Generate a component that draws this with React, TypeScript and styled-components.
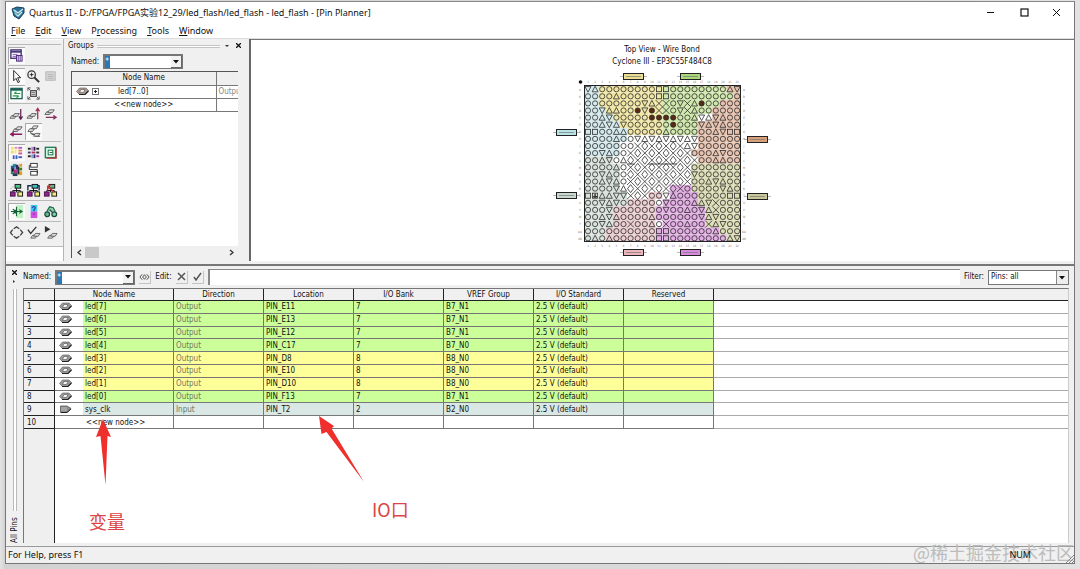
import React from 'react';
import styled, { createGlobalStyle } from 'styled-components';

const Global = createGlobalStyle`
  * { box-sizing: border-box; }
  body { margin: 0; background: #dcdcdc; color: #111; font: 8px/12px "DejaVu Sans Condensed", "Noto Sans CJK SC", sans-serif; }
  button, input, select { font: inherit; color: inherit; margin: 0; padding: 0; border: 0; border-radius: 0; }
  button { background: none; }
  h1, h2, p { margin: 0; font-weight: normal; font-size: inherit; }
`;

const ui = '"Noto Sans", "Noto Sans CJK SC", sans-serif';

const Desktop = styled.div`
  display: flex;
  min-height: 100vh;
  padding: 1px 5px 5px;
  background: linear-gradient(90deg, #e4e4e4, #d2d2d2 5px, #d8d8d8 50%, #e2e2e2);
`;
const Window = styled.main`
  flex: 1;
  min-width: 0;
  display: flex;
  flex-direction: column;
  background: #f0f0f0;
  border: 1px solid #777;
  border-top-color: #888;
`;
const TitleBar = styled.header`
  display: flex;
  align-items: center;
  gap: 4px;
  height: 21px;
  padding: 0 5px;
  background: #fff;
  font: 9px/16px ${ui};
  h1 { flex: 1; }
`;
const WindowButton = styled.button`
  display: flex;
  justify-content: center;
  align-items: center;
  width: 30px;
  height: 20px;
  &:last-child { width: 26px; }
`;
const MenuBar = styled.nav`
  display: flex;
  gap: 10px;
  height: 15px;
  padding: 0 5px;
  background: #fff;
  font: 9px/14px ${ui};
  u { text-underline-offset: 1px; }
`;
const Upper = styled.section`
  display: flex;
  height: 223px;
  border-top: 1px solid #ddd;
`;
const ToolColumn = styled.div`
  width: 58px;
  background: #fff;
  border-right: 1px solid #b4b4b4;
`;
const Toolbar = styled.div`
  padding: 4px 2px;
  background: #f0f0f0;
  border-bottom: 1px solid #bbb;
  border-top: 1px solid #fff;
`;
const ToolGroup = styled.div`
  display: grid;
  grid-template-columns: repeat(3, 17px);
  grid-auto-rows: 17px;
  padding: 2px 0 1px;
  border-top: 1px solid #bababa;
`;
const ToolButton = styled.button<{ $on?: boolean }>`
  display: flex;
  justify-content: center;
  align-items: center;
  background: ${p => (p.$on ? '#fafafa' : 'transparent')};
  box-shadow: ${p => (p.$on ? 'inset 1px 1px #aaa' : 'none')};
`;
const GroupsPanel = styled.div`
  width: 187px;
  display: flex;
  flex-direction: column;
  padding: 1px 11px 3px 4px;
  border-right: 2px solid #666;
`;
const PanelTitle = styled.div`
  display: flex;
  align-items: center;
  gap: 3px;
  height: 12px;
  margin-right: -4px;
`;
const Grip = styled.span`
  flex: 1;
  height: 3px;
  border: solid #c4c4c4;
  border-width: 1px 0;
  background: #fff;
`;
const TinyButton = styled.button`
  width: 8px;
  height: 10px;
  line-height: 8px;
`;
const NamedRow = styled.div`
  display: flex;
  align-items: center;
  gap: 4px;
  height: 19px;
  padding-left: 3px;
`;
const Combo = styled.div`
  display: flex;
  height: 15px;
  background: #fff;
  border: 1px solid #777;
  border-top-width: 2px;
  border-left-width: 2px;
`;
const ComboInput = styled.input`
  width: 66px;
  color: #fff;
  outline: 0;
  background: linear-gradient(#2878b8, #2878b8) 0 0 / 5px 100% no-repeat #fff;
`;
const Drop = styled.button`
  width: 11px;
  background: #f2f2f2;
  border: solid #666;
  border-width: 0 1px 1px 0;
  display: flex;
  align-items: center;
  justify-content: center;
`;
const GroupsBox = styled.div`
  flex: 1;
  display: flex;
  flex-direction: column;
  justify-content: space-between;
  margin-left: 3px;
  overflow: hidden;
  background: #fff;
  border: solid #555;
  border-width: 1px 0 0 1px;
`;
const GroupsTable = styled.table`
  width: 200px;
  table-layout: fixed;
  border-collapse: collapse;
  th { background: #efefef; font-weight: normal; }
  td, th { height: 13px; padding: 0 2px; border: solid #777; border-width: 0 1px 1px 0; text-align: center; white-space: nowrap; }
  td:last-child { text-align: left; color: #888; }
`;
const GroupName = styled.div`
  display: grid;
  grid-template-columns: 14px 10px 1fr;
  align-items: center;
  gap: 2px;
  padding-left: 2px;
  text-align: left;
  span { padding-left: 14px; }
`;
const Plus = styled.button`
  display: flex;
  justify-content: center;
  align-items: center;
  width: 7px;
  height: 7px;
  border: 1px solid #777;
`;
const ScrollBar = styled.div`
  display: flex;
  align-items: center;
  height: 12px;
  padding: 0 3px;
  background: #f0f0f0;
  button { width: 8px; height: 12px; display: flex; align-items: center; justify-content: center; }
`;
const Thumb = styled.span`
  width: 14px;
  height: 11px;
  margin: 0 auto 0 2px;
  background: #c9c9c9;
`;
const DeviceView = styled.div`
  flex: 1;
  display: flex;
  flex-direction: column;
  align-items: center;
  padding: 4px 1px 0 0;
  background: #fff;
  border-top: 1px solid #777;
  text-align: center;
`;
const Lower = styled.section`
  flex: 1;
  position: relative;
  display: flex;
  margin-top: 3px;
  border-top: 2px solid #777;
  border-bottom: 1px solid #999;
  padding-bottom: 3px;
`;
const Rail = styled.div`
  width: 17px;
  display: flex;
  flex-direction: column;
  align-items: center;
  gap: 2px;
  padding-top: 2px;
`;
const RailGrip = styled.span`
  flex: 1;
  width: 4px;
  margin-top: 4px;
  border: solid #bbb;
  border-width: 0 1px;
  background: #fff;
`;
const RailLabel = styled.h2`
  writing-mode: vertical-rl;
  transform: rotate(180deg);
  height: 30px;
  line-height: 12px;
`;
const PinArea = styled.div`
  flex: 1;
  min-width: 0;
  display: flex;
  flex-direction: column;
  padding-right: 5px;
`;
const EditBar = styled.div`
  display: flex;
  align-items: center;
  gap: 4px;
  height: 22px;
`;
const SquareButton = styled.button`
  width: 12px;
  height: 13px;
  display: flex;
  align-items: center;
  justify-content: center;
  border: solid #c4c4c4;
  border-width: 0 1px 1px 0;
`;
const EditInput = styled.input`
  flex: 1;
  min-width: 0;
  height: 16px;
  background: #fff;
  border: solid #888;
  border-width: 1px 0 0 2px;
  outline: 0;
`;
const FilterBox = styled.div`
  position: relative;
  width: 81px;
  height: 15px;
  svg { position: absolute; right: 4px; top: 6px; pointer-events: none; }
`;
const FilterSelect = styled.select`
  appearance: none;
  width: 100%;
  height: 15px;
  padding-left: 2px;
  line-height: 12px;
  background: linear-gradient(#888, #888) right 11px top 0 / 1px 100% no-repeat, linear-gradient(#eee, #eee) right 0 top 0 / 11px 100% no-repeat #fff;
  border: 1px solid #777;
`;
const Sheet = styled.div`
  flex: 1;
  display: flex;
  flex-direction: column;
  background: linear-gradient(90deg, #efefef 30px, #222 30px, #222 31px, #fff 31px);
  border: solid #777;
  border-width: 1px 1px 0;
  border-right-color: #ccc;
`;
const PinTable = styled.table`
  width: 100%;
  height: 140px;
  table-layout: fixed;
  border-collapse: separate;
  border-spacing: 0;
  line-height: 11px;
  th, td { padding: 0 0 0 2px; text-align: left; font-weight: normal; white-space: nowrap; border: solid #777; border-width: 0 1px 1px 0; }
  thead th { padding: 0; text-align: center; background: #f0f0f0; border-color: #222; }
  tbody th { padding-left: 3px; background: #f0f0f0; border-color: #222; }
  tr > :last-child { border-right: 0; }
  tbody tr > :last-child { background: #fff; border-color: #aaa; }
`;
const PinRow = styled.tr<{ $tone: string }>`
  td { background: ${p => p.$tone}; }
  td.name { background: linear-gradient(90deg, #fff 28px, ${p => p.$tone} 28px); }
  td.direction { color: #6f7a66; }
`;
const NameCell = styled.div`
  display: flex;
  align-items: center;
  gap: 13px;
  padding-left: 2px;
`;
const NewNode = styled.div`
  padding-left: 29px;
`;
const StatusBar = styled.footer`
  position: relative;
  display: flex;
  align-items: center;
  justify-content: space-between;
  height: 16px;
  padding: 0 43px 0 2px;
  font: 9px/14px ${ui};
  svg { position: absolute; right: 0; bottom: 0; }
`;
const Watermark = styled.span`
  position: absolute;
  right: 0;
  bottom: 1px;
  font: 18px/20px "Noto Sans CJK SC", sans-serif;
  color: #bcbcbc;
`;
const KeyState = styled.span`
  position: relative;
  color: #111;
`;
const Note = styled.span<{ $x: number; $y: number }>`
  position: absolute;
  left: ${p => p.$x}px;
  top: ${p => p.$y}px;
  color: #db4545;
  font: 18px/22px "Noto Sans CJK SC", sans-serif;
`;
const Arrows = styled.svg`
  position: absolute;
  left: 84px;
  top: 146px;
  pointer-events: none;
`;

const DownArrow = () => <svg width="6" height="4" viewBox="0 0 6 4"><path d="M0 0h6L3 3.5z" fill="#111" /></svg>;

const PinGlyph = ({ input, tint = '#9a9a9a' }: { input?: boolean; tint?: string }) => (
  <svg width="13" height="9" viewBox="0 0 13 9">
    {input ? (
      <>
        <path d="M1.500 1h6.500l4 2.500L8 7.500H1.500z" fill="#8c8c8c" stroke="#555" strokeWidth=".8" />
        <path d="M2 3h6M2 5h6" stroke="#ccc" strokeWidth=".8" />
        <path d="M2 7.500h6l4-3.500" fill="none" stroke="#222" />
      </>
    ) : (
      <>
        <path d="M0.500 4.500L3.500 1H10l2.500 2.500L9 7.500H3.500z" fill={tint} stroke="#666" strokeWidth=".7" />
        <path d="M5 2.500h4L7.500 5.500h-4z" fill="#f4f4f4" stroke="#555" strokeWidth=".6" />
        <path d="M3 7.500h6l3.500-3.500" fill="none" stroke="#222" strokeWidth="1.200" />
      </>
    )}
  </svg>
);

const pad = (x: number, y: number) => <path d={`M${x} ${y + 3}l2-3h5l-2 3z`} fill="#ddd" stroke="#444" strokeWidth=".8" />;
const blocks = (list: [number, number, number, number, string][]) =>
  list.map(([x, y, w, h, c], i) => <rect key={i} x={x} y={y} width={w} height={h} fill={c} />);
const hierarchy = (a: string, b: string, extra: React.ReactNode) => (
  <>
    <path d="M8 5v5M4 11V8h8v3" fill="none" stroke="#111" />
    <rect x="6.500" y="1.500" width="6" height="4" fill={a} stroke="#111" />
    <rect x="1.500" y="9.500" width="5" height="4.500" fill={b} stroke="#4a1050" />
    <rect x="9.500" y="9.500" width="5" height="4.500" fill="#f2ec80" stroke="#111" />
    {extra}
  </>
);

const icons: Record<string, React.ReactNode> = {
  'Pin planner': <><rect x="2" y="2" width="11" height="9" fill="#eef" stroke="#4b3a78" strokeWidth="1.500" /><path d="M2 4h11" stroke="#4b3a78" strokeWidth="2" /><path d="M4 7h5M4 9h4" stroke="#9b5fa8" /><rect x="8" y="8" width="6" height="6" fill="#d9c8ee" stroke="#4b2a7a" /><path d="M10 8v6M12 8v6" stroke="#4b2a7a" strokeWidth=".7" /></>,
  'Select': <path d="M5 1.500v11l2.500-2.500 2 4.500 1.700-.8-2-4.400H12.500z" fill="#fff" stroke="#222" />,
  'Zoom': <><circle cx="6" cy="6" r="4" fill="#f6f6f6" stroke="#333" strokeWidth="1.300" /><path d="M4 6h4M6 4v4" stroke="#222" /><path d="M9 9l5 5" stroke="#333" strokeWidth="2.200" /></>,
  'Full screen': <><rect x="3" y="3" width="10" height="9" fill="#d6d6d6" stroke="#b4b4b4" /><path d="M5 6h6M5 8h6M5 10h6" stroke="#b4b4b4" /></>,
  'Swap view': <><rect x="2" y="2.500" width="12" height="11" fill="#f0fbf4" stroke="#165c50" strokeWidth="1.300" /><path d="M2 4h12" stroke="#165c50" strokeWidth="2" /><path d="M12 8H6M8 6L5.500 8M4 10.500h6M8 12.500l2.500-2" stroke="#2a9a50" fill="none" strokeWidth="1.200" /></>,
  'Fit window': <><rect x="5" y="5" width="6" height="6" fill="#ddd" stroke="#222" /><path d="M2 5V2h3M2 2l3 3M14 5V2h-3M14 2l-3 3M2 11v3h3M2 14l3-3M14 11v3h-3M14 14l-3-3" fill="none" stroke="#555" /><path d="M6 7h4M6 9h4" stroke="#555" strokeWidth=".8" /></>,
  'Move down': <>{pad(1, 9)}{pad(4, 7)}<path d="M12.500 2v11M10.500 10l2 3 2-3" fill="none" stroke="#5a2050" strokeWidth="1.300" /></>,
  'Move up': <>{pad(1, 9)}{pad(4, 7)}<path d="M12.500 13V2M10.500 4.500l2-3 2 3" fill="none" stroke="#a02858" strokeWidth="1.300" /></>,
  'Move right': <>{pad(2, 5)}{pad(5, 3)}<path d="M3 11h11M11 9l3 2-3 2" fill="none" stroke="#8a3060" strokeWidth="1.400" /></>,
  'Move left': <>{pad(4, 5)}{pad(7, 3)}<path d="M14 11H2M5 9l-3 2 3 2" fill="none" stroke="#8a1860" strokeWidth="1.600" /></>,
  'Route pins': <>{pad(2, 5)}{pad(6, 2)}<path d="M5 8v2l4 1" fill="none" stroke="#555" /><path d="M6 11h3.500M10 13h5" stroke="#444" />{pad(8, 10)}</>,
  'Bank colours': blocks([[2, 2, 3, 3, '#f5e66a'], [6, 2, 3, 2, '#e8a'], [10, 2, 4, 2, '#b558c8'], [2, 6, 3, 3, '#f3d85c'], [6, 5, 2, 4, '#f5e66a'], [10, 5, 4, 2, '#e48a60'], [10, 8, 4, 2, '#c8559a'], [4, 11, 2, 4, '#4a58c8'], [7, 11, 2, 4, '#36a'], [10, 12, 4, 2, '#4a58c8']]),
  'Group colours': blocks([[2, 3, 3, 2, '#222'], [6, 2, 1, 4, '#93a'], [8, 2, 2, 4, '#224'], [11, 3, 3, 2, '#222'], [2, 7, 3, 2, '#4a3a70'], [6, 7, 4, 2, '#a36'], [11, 7, 3, 2, '#333'], [2, 11, 3, 2, '#222'], [6, 10, 1, 4, '#26a'], [8, 10, 2, 4, '#426'], [11, 11, 3, 2, '#93a']]),
  'Edges': <><rect x="2.500" y="2.500" width="11" height="11" fill="#dfe" stroke="#277a5c" strokeWidth="1.500" /><path d="M14 3v11H4" fill="none" stroke="#b33" strokeWidth="1.300" /><rect x="5.500" y="5.500" width="5" height="5" fill="#ffe" stroke="#164" /><path d="M7 8h3" stroke="#164" /></>,
  'Differential pairs': blocks([[4, 2, 4, 3, '#2a9a9a'], [2, 4, 4, 4, '#235a9a'], [7, 3, 3, 5, '#3a2a60'], [11, 2, 3, 3, '#d8a030'], [2, 8, 3, 5, '#2a8a60'], [5, 8, 4, 4, '#b0308a'], [11, 6, 3, 3, '#4a7a20'], [4, 12, 5, 3, '#223a5a'], [10, 10, 4, 4, '#e0a020'], [9, 5, 2, 8, '#163a3a'], [3, 7, 2, 3, '#111']]),
  'Chain': <><rect x="5" y="1.500" width="7" height="4" fill="#fff" stroke="#333" /><rect x="5" y="10" width="7" height="4" fill="#fff" stroke="#333" /><path d="M5 3.500H3.500V8H12v4" fill="none" stroke="#333" /></>,
  'Hierarchy A': hierarchy('#4dbf8c', '#8d2a85', <path d="M2 6l3-3" stroke="#666" strokeDasharray="1 1" />),
  'Hierarchy B': hierarchy('#41b9bd', '#8d2a85', <path d="M2 8V3h4M12 3h2v5" fill="none" stroke="#135" strokeWidth="1.500" />),
  'Hierarchy C': hierarchy('#6bb08c', '#8d2a85', <path d="M5 8V4l4 3 3 3M5 4l3-2" fill="none" stroke="#c33" strokeWidth="1.500" />),
  'Fanout': <><rect x="8" y="1" width="7" height="14" fill="#c0f2c4" /><path d="M2 8h12M8 3v10M4 5.500l4 2.500-4 2.500M11 6l3 2-3 2" fill="none" stroke="#145e38" strokeWidth="1.200" /><circle cx="7" cy="8" r="2" fill="#145e38" /></>,
  'Help': <><rect x="5" y="1" width="7" height="7" fill="#35cdf0" /><rect x="5" y="8" width="7" height="7" fill="#d04de0" /><path d="M6.500 4c2-3 5 0 2 2v2M8.500 10v1.500" fill="none" stroke="#333a9c" strokeWidth="1.200" /></>,
  'Find': <><path d="M4 8l3-5 4 1 2 4" fill="#8cd0a8" stroke="#276d50" strokeWidth="1.300" /><circle cx="4.500" cy="11" r="2.500" fill="#6cba91" stroke="#164b42" strokeWidth="1.300" /><circle cx="12" cy="11" r="2.500" fill="#88d0a0" stroke="#164b42" strokeWidth="1.300" /><path d="M7 6l3 3" stroke="#164b42" strokeWidth="1.300" /></>,
  'Refresh': <path d="M5 4l3-2 3 2M12 5l2.500 3L12 11M11 12l-3 2-3-2M4 11L1.500 8 4 5" fill="none" stroke="#444" strokeWidth="1.400" />,
  'Check': <><path d="M2 5l3 4 6-7" fill="none" stroke="#333" strokeWidth="1.400" />{pad(5, 11)}{pad(8, 9)}</>,
  'Run': <><path d="M2 1l6 3.500L2 8z" fill="#333" />{pad(5, 11)}{pad(8, 9)}</>,
};

const toolGroups: string[][] = [
  ['Pin planner'],
  ['Select', 'Zoom', 'Full screen', 'Swap view', 'Fit window'],
  ['Move down', 'Move up', 'Move right', 'Move left', 'Route pins'],
  ['Bank colours', 'Group colours', 'Edges', 'Differential pairs', 'Chain'],
  ['Hierarchy A', 'Hierarchy B', 'Hierarchy C'],
  ['Fanout', 'Help', 'Find'],
  ['Refresh', 'Check', 'Run'],
];
const pressed = ['Pin planner', 'Select', 'Swap view', 'Route pins', 'Bank colours', 'Fanout'];

/* One character per ball: o user I/O, ^ power, v ground, x and d shared balls, # dedicated, * assigned, s programmed */
const balls = [
  'v^oooooooo##oooooooo^v',
  'oooo^ooooo##oooooooooo',
  'oooooooov^xxovx^*ooooo',
  'oov^^oo*v*xxovx^oooooo',
  'oo^vooooo****oo^v^v^oo',
  'oo^v^voooooo*ooov^v^oo',
  '##oo^^ooooo^oooooo^v##',
  'oooo^oov^v^v^v^voooooo',
  'oooooooxdxdxdx^voooooo',
  'oov^ooxdxdxdxdxooo^voo',
  'oo^vo^dxdxdxdxdxoo^^oo',
  'oooo^oxdxdxdxdxooooooo',
  'oov^oodxdxdxdxdvoooooo',
  'oo^v^oxdxdxdxdxoo^v^oo',
  'oooov^dxdxdxdxooooov^o',
  '#s^^vvxdxoov^ooooooo##',
  'oov^voooooovooo^^vxooo',
  'ooovooooooovoo^ov^xooo',
  'oo^v^oooo^oooooov^vooo',
  'oov^ooxoo^oxoo^oox^voo',
  'oooooooooo##oooooo^ooo',
  'o^o^oooooo##oooooooo^v',
];
/* I/O bank that owns each ball */
const banks = [
  'bbyyyyyyyyygggggggggrr',
  'bbyyyyyyyyyggggggggggr',
  'bbyyyyyyyyyggggggggrrr',
  'bbbyyyyyyyygggggggrrrr',
  'bbbbyyyyyyygggggwwrrrr',
  'bbbbbyyyyyygggggrrrrrr',
  'bbbbbbyyyyygggggrrrrrr',
  'bbbbbbwwwwwwwwwwrrrrrr',
  'bbbbbwwwwwwwwwwwrrrrrr',
  'bbbbbwwwwwwwwwwrrrrrrr',
  'ccccwwwwwwwwwwwwrrrrrr',
  'cccccwwwwwwwwwwooooooo',
  'cccccwwwwwwwwwwooooooo',
  'cccccwwwwwwwwwwooooooo',
  'cccccwwwwwwwmmmooooooo',
  'ccccccwwwppwmmmmoooooo',
  'ccccccppppwmmmmmoooooo',
  'ccccppppppmmmmmmmooooo',
  'ccccppppppmmmmmmmooooo',
  'ccccppppppwmmmmmmooooo',
  'cccpppppppmmmmmmmmmooo',
  'cccpppppppmmmmmmmmmmoo',
];
const bankColor: Record<string, string> = {
  b: '#d4e9ec', y: '#f0e6a6', g: '#d0e8ac', r: '#e5c1ae', c: '#d9e2dc', o: '#dcddb6', m: '#e3aee4', p: '#eccdd0', w: '#ffffff',
};
const rowNames = 'A B C D E F G H J K L M N P R T U V W Y AA AB'.split(' ');
const PITCH = 7.1;

const Ball = ({ kind, x, y }: { kind: string; x: number; y: number }) => {
  const up = `M${x - 3} ${y + 2.600}L${x} ${y - 3}L${x + 3} ${y + 2.600}z`;
  const down = `M${x - 3} ${y - 2.600}L${x} ${y + 3}L${x + 3} ${y - 2.600}z`;
  if (kind === '^') return <path d={up} />;
  if (kind === 'v') return <path d={down} />;
  if (kind === 'x') return <path d={`M${x - 3.500} ${y - 3.500}L${x + 3.500} ${y + 3.500}M${x + 3.500} ${y - 3.500}L${x - 3.500} ${y + 3.500}`} />;
  if (kind === 'd') return <path d={`M${x} ${y - 4}L${x + 3} ${y}L${x} ${y + 4}L${x - 3} ${y}z`} />;
  if (kind === '#') return <rect x={x - 2.500} y={y - 2.500} width="5" height="5" />;
  if (kind === 's') return <><rect x={x - 2.500} y={y - 2.500} width="5" height="5" /><path d={`M${x - 2} ${y + 1}h4M${x} ${y - 2}v4`} strokeWidth="1.400" /></>;
  return <circle cx={x} cy={y} r="2.600" fill={kind === '*' ? '#5a2a12' : 'none'} />;
};

const tabs: [number, number, string][] = [
  [623, 73, '#e8dd90'], [680, 73, '#a9d77a'], [556, 129, '#b8e4e8'], [556, 192, '#c9d9d2'],
  [747, 136, '#d9a07a'], [747, 193, '#c9c79a'], [623, 249, '#eeb5bd'], [680, 249, '#d98be0'],
];

const Chip = () => (
  <svg width="226" height="190" viewBox="549 68 226 190" role="img" aria-label="Package top view">
    {tabs.map(([x, y, c], i) => (
      <g key={i}>
        <path d={`M${x - 3} ${y + 3.500}h27`} stroke="#bbb" />
        <rect x={x + 0.5} y={y + 0.5} width="20" height="6" fill={c} stroke="#222" />
        <path d={`M${x + 3} ${y + 3.500}h15`} stroke="#777" strokeWidth=".7" />
      </g>
    ))}
    {banks.map((row, r) => [...row].map((b, c) => (
      <rect key={`${r}-${c}`} x={584.5 + c * PITCH} y={85.5 + r * PITCH} width="7.200" height="7.200" fill={bankColor[b]} />
    )))}
    <g fill="none" stroke="#2c2c2c" strokeWidth=".8">
      {balls.map((row, r) => [...row].map((k, c) => (
        <Ball key={`${r}-${c}`} kind={k} x={588 + c * PITCH} y={89.2 + r * PITCH} />
      )))}
      <path d="M627 164h8M648 164h29" />
    </g>
    <rect x="584.500" y="85.500" width="156" height="156" fill="none" stroke="#222" />
    <circle cx="580.500" cy="82" r="1.800" fill="#111" />
    <g fill="#777" fontSize="3" textAnchor="middle">
      {rowNames.map((n, i) => (
        <React.Fragment key={n}>
          <text x="580" y={90.500 + i * PITCH}>{n}</text>
          <text x="744" y={90.500 + i * PITCH}>{n}</text>
          <text x={588 + i * PITCH} y="83">{i + 1}</text>
          <text x={588 + i * PITCH} y="247">{i + 1}</text>
        </React.Fragment>
      ))}
    </g>
  </svg>
);

const G = '#ccff99';
const Y = '#ffff99';
const B = '#d9e8e4';
const pins: [string, string, string, string, string, string][] = [
  ['led[7]', 'Output', 'PIN_E11', '7', 'B7_N1', G],
  ['led[6]', 'Output', 'PIN_E13', '7', 'B7_N1', G],
  ['led[5]', 'Output', 'PIN_E12', '7', 'B7_N1', G],
  ['led[4]', 'Output', 'PIN_C17', '7', 'B7_N0', G],
  ['led[3]', 'Output', 'PIN_D8', '8', 'B8_N0', Y],
  ['led[2]', 'Output', 'PIN_E10', '8', 'B8_N0', Y],
  ['led[1]', 'Output', 'PIN_D10', '8', 'B8_N0', Y],
  ['led[0]', 'Output', 'PIN_F13', '7', 'B7_N1', G],
  ['sys_clk', 'Input', 'PIN_T2', '2', 'B2_N0', B],
];
const columns = ['Node Name', 'Direction', 'Location', 'I/O Bank', 'VREF Group', 'I/O Standard', 'Reserved'];
const menus = ['File', 'Edit', 'View', 'Processing', 'Tools', 'Window'];

const NamedCombo = ({ id }: { id: string }) => (
  <Combo>
    <ComboInput id={id} defaultValue="*" />
    <Drop aria-label="Show filters"><DownArrow /></Drop>
  </Combo>
);

export default function App() {
  return (
    <Desktop>
      <Global />
      <Window>
        <TitleBar>
          <svg width="14" height="14" viewBox="0 0 14 14">
            <path d="M1 3l5-2 7 1v5l-5 6-5-3z" fill="#2d6f96" stroke="#163f5c" />
            <path d="M3 4l4 3 5-4M4 7l3 3 4-4" fill="none" stroke="#d6eef5" strokeWidth="1.300" />
            <path d="M2 3l4 7" stroke="#7cc" />
          </svg>
          <h1>Quartus II - D:/FPGA/FPGA实验12_29/led_flash/led_flash - led_flash - [Pin Planner]</h1>
          <WindowButton aria-label="Minimize"><svg width="9" height="9"><path d="M1 4.500h7" stroke="#111" /></svg></WindowButton>
          <WindowButton aria-label="Maximize"><svg width="9" height="9"><rect x="1" y="1" width="7" height="7" fill="none" stroke="#111" strokeWidth="1.200" /></svg></WindowButton>
          <WindowButton aria-label="Close"><svg width="9" height="9"><path d="M1 1l7 7M8 1L1 8" stroke="#111" /></svg></WindowButton>
        </TitleBar>
        <MenuBar>
          {menus.map(m => (
            <button key={m}>{m === 'Processing' ? <>P<u>r</u>ocessing</> : <><u>{m[0]}</u>{m.slice(1)}</>}</button>
          ))}
        </MenuBar>

        <Upper>
          <ToolColumn>
            <Toolbar>
              {toolGroups.map((group, i) => (
                <ToolGroup key={i}>
                  {group.map(name => (
                    <ToolButton key={name} aria-label={name} $on={pressed.includes(name)}>
                      <svg width="15" height="15" viewBox="0 0 16 16">{icons[name]}</svg>
                    </ToolButton>
                  ))}
                </ToolGroup>
              ))}
            </Toolbar>
          </ToolColumn>

          <GroupsPanel>
            <PanelTitle>
              <h2>Groups</h2>
              <Grip />
              <TinyButton aria-label="Panel menu"><svg width="4" height="3"><path d="M0 0h4L2 2z" fill="#333" /></svg></TinyButton>
              <TinyButton aria-label="Close panel"><svg width="5" height="5"><path d="M0 0l5 5M5 0L0 5" stroke="#111" strokeWidth="1.300" /></svg></TinyButton>
            </PanelTitle>
            <NamedRow>
              <label htmlFor="group-name">Named:</label>
              <NamedCombo id="group-name" />
            </NamedRow>
            <GroupsBox>
              <GroupsTable>
                <colgroup><col style={{ width: 144 }} /><col /></colgroup>
                <thead><tr><th>Node Name</th><th /></tr></thead>
                <tbody>
                  <tr>
                    <td>
                      <GroupName>
                        <PinGlyph tint="#b09a90" />
                        <Plus aria-label="Expand"><svg width="5" height="5"><path d="M1 2.500h3M2.500 1v3" stroke="#222" /></svg></Plus>
                        <span>led[7..0]</span>
                      </GroupName>
                    </td>
                    <td>Output</td>
                  </tr>
                  <tr><td>&lt;&lt;new node&gt;&gt;</td><td /></tr>
                </tbody>
              </GroupsTable>
              <ScrollBar>
                <button aria-label="Scroll left"><svg width="5" height="7"><path d="M4 1L1 3.500 4 6" fill="none" stroke="#333" strokeWidth="1.300" /></svg></button>
                <Thumb />
                <button aria-label="Scroll right"><svg width="5" height="7"><path d="M1 1l3 2.500L1 6" fill="none" stroke="#333" strokeWidth="1.300" /></svg></button>
              </ScrollBar>
            </GroupsBox>
          </GroupsPanel>

          <DeviceView>
            <p>Top View - Wire Bond</p>
            <p>Cyclone III - EP3C55F484C8</p>
            <Chip />
          </DeviceView>
        </Upper>

        <Lower>
          <Rail>
            <TinyButton aria-label="Close pins"><svg width="5" height="5"><path d="M0 0l5 5M5 0L0 5" stroke="#111" strokeWidth="1.300" /></svg></TinyButton>
            <svg width="3" height="3"><path d="M0 0l2 1.500L0 3z" fill="#333" /></svg>
            <RailGrip />
            <RailLabel>All Pins</RailLabel>
          </Rail>
          <PinArea>
            <EditBar>
              <label htmlFor="pin-name">Named:</label>
              <NamedCombo id="pin-name" />
              <SquareButton aria-label="Browse nodes"><svg width="12" height="8" viewBox="0 0 12 8"><path d="M3.500 1L1 4l2.500 3M8.500 1L11 4 8.500 7M6 1.500L4 4l2 2.500L8 4z" fill="none" stroke="#444" /></svg></SquareButton>
              <label htmlFor="pin-edit">Edit:</label>
              <SquareButton aria-label="Cancel edit"><svg width="9" height="9"><path d="M1 1l7 7M8 1L1 8" stroke="#555" strokeWidth="1.500" /></svg></SquareButton>
              <SquareButton aria-label="Accept edit"><svg width="9" height="9"><path d="M1 5l2 3 5-7" fill="none" stroke="#555" strokeWidth="1.500" /></svg></SquareButton>
              <EditInput id="pin-edit" />
              <label htmlFor="pin-filter">Filter:</label>
              <FilterBox>
                <FilterSelect id="pin-filter"><option>Pins: all</option></FilterSelect>
                <DownArrow />
              </FilterBox>
            </EditBar>
            <Sheet>
              <PinTable>
                <colgroup>
                  <col style={{ width: 31 }} /><col style={{ width: 119 }} />
                  {columns.slice(1).map(c => <col key={c} style={{ width: 90 }} />)}
                  <col />
                </colgroup>
                <thead><tr><th />{columns.map(c => <th key={c}>{c}</th>)}<th /></tr></thead>
                <tbody>
                  {pins.map(([name, dir, loc, bank, vref, tone], i) => (
                    <PinRow key={name} $tone={tone}>
                      <th>{i + 1}</th>
                      <td className="name"><NameCell><PinGlyph input={dir === 'Input'} />{name}</NameCell></td>
                      <td className="direction">{dir}</td>
                      <td>{loc}</td>
                      <td>{bank}</td>
                      <td>{vref}</td>
                      <td>2.5 V (default)</td>
                      <td />
                      <td />
                    </PinRow>
                  ))}
                  <PinRow $tone="#fff">
                    <th>10</th>
                    <td className="name"><NewNode>&lt;&lt;new node&gt;&gt;</NewNode></td>
                    <td /><td /><td /><td /><td /><td /><td />
                  </PinRow>
                </tbody>
              </PinTable>
            </Sheet>
          </PinArea>
          <Arrows width="280" height="76" viewBox="90 412 280 76">
            <path d="M103 419L111 437 107.500 436 105.500 485 100.500 436 96 437z" fill="#ee2f2c" />
            <path d="M319 416L334 426 331.500 428.500 364 482 326.500 432 321.500 434z" fill="#ee2f2c" />
          </Arrows>
          <Note $x={83} $y={244}>变量</Note>
          <Note $x={366} $y={232}>IO口</Note>
        </Lower>
        <StatusBar>
          <span>For Help, press F1</span>
          <Watermark>@稀土掘金技术社区</Watermark>
          <KeyState>NUM</KeyState>
          <svg width="9" height="9"><path d="M1 9l8-8M4 9l5-5M7 9l2-2" stroke="#888" /></svg>
        </StatusBar>
      </Window>
    </Desktop>
  );
}
